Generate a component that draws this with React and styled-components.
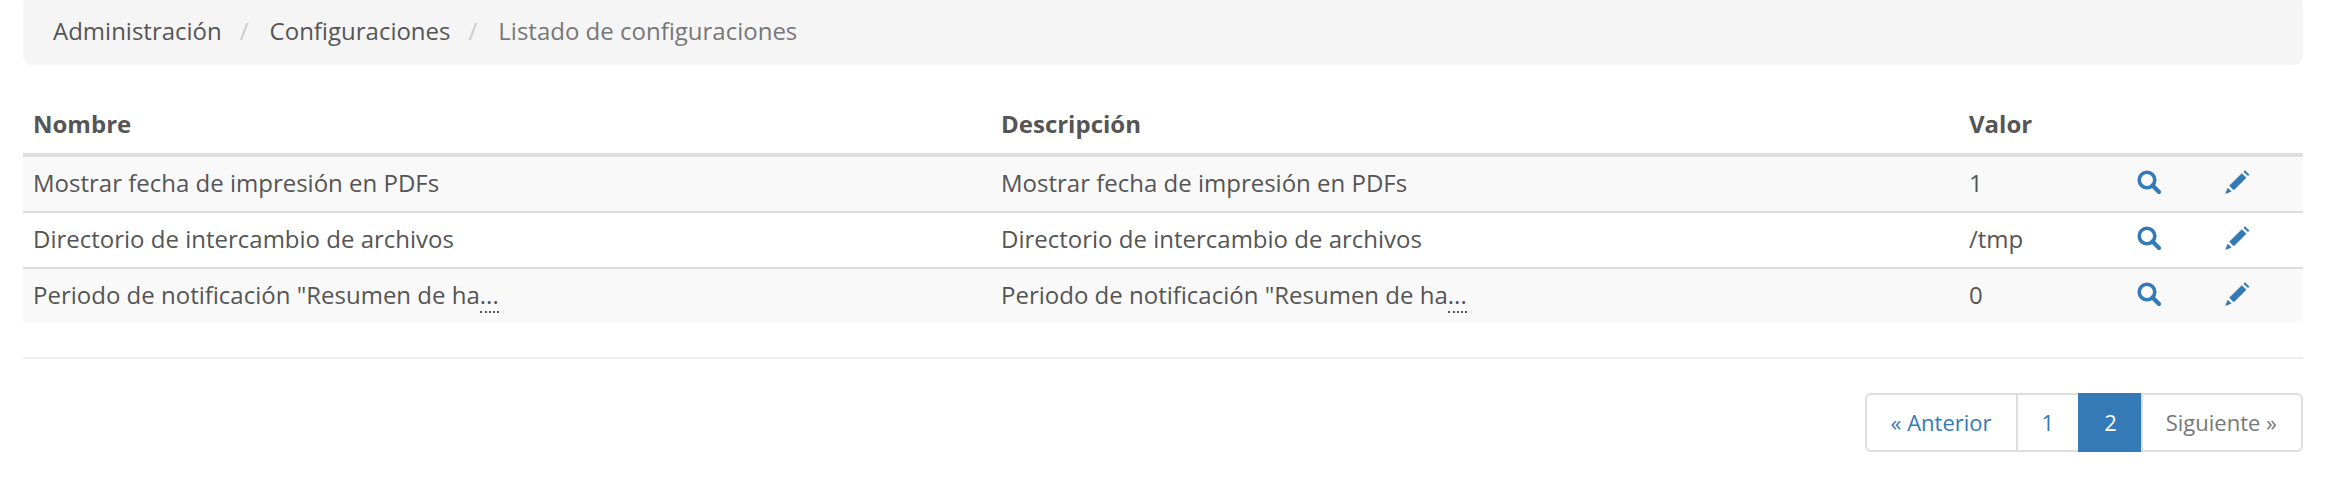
import styled, { createGlobalStyle } from 'styled-components';

const rows = [
  { name: 'Mostrar fecha de impresión en PDFs', value: '1' },
  { name: 'Directorio de intercambio de archivos', value: '/tmp' },
  { name: 'Periodo de notificación "Resumen de ha', value: '0', cut: true },
];

function SearchIcon() {
  return (
    <svg width="24" height="24" viewBox="0 0 24 24" aria-hidden="true">
      <circle cx="10" cy="10" r="7.8" fill="none" stroke="currentColor" strokeWidth="3.6" />
      <path d="M15.5 15.5 L22 22" stroke="currentColor" strokeWidth="4.2" strokeLinecap="round" />
    </svg>
  );
}

function PencilIcon() {
  return (
    <svg width="25" height="24" viewBox="0 0 25 24" aria-hidden="true">
      <path fill="currentColor" d="M19.8 0.3 L24.4 4.6 L23 6 L18.4 1.7 Z" />
      <path fill="currentColor" d="M16.8 3.2 L21.4 7.7 L8.8 20.2 L4.2 15.8 Z" />
      <path fill="currentColor" d="M2.6 17.8 L6.6 21.6 L0.3 24 Z" />
    </svg>
  );
}

function App() {
  return (
    <>
      <GlobalStyle />
      <Page>
        <Breadcrumb>
          <Crumb>Administración</Crumb>
          <Crumb>Configuraciones</Crumb>
          <Crumb $active>Listado de configuraciones</Crumb>
        </Breadcrumb>
        <Table>
          <colgroup>
            <TextCol />
            <TextCol />
            <ValueCol />
            <IconCol />
            <IconCol />
          </colgroup>
          <thead>
            <tr>
              <Th>Nombre</Th>
              <Th>Descripción</Th>
              <Th>Valor</Th>
              <Th />
              <Th />
            </tr>
          </thead>
          <tbody>
            {rows.map((row) => (
              <Row key={row.name}>
                <Td>
                  {row.name}
                  {row.cut && <Abbr title={row.name}>...</Abbr>}
                </Td>
                <Td>
                  {row.name}
                  {row.cut && <Abbr title={row.name}>...</Abbr>}
                </Td>
                <Td>{row.value}</Td>
                <Td>
                  <IconLink href="#"><SearchIcon /></IconLink>
                </Td>
                <Td>
                  <IconLink href="#"><PencilIcon /></IconLink>
                </Td>
              </Row>
            ))}
          </tbody>
        </Table>
        <Divider />
        <PagerWrap>
          <Pager>
            <PageLink href="#" $first>« Anterior</PageLink>
            <PageLink href="#">1</PageLink>
            <PageLink $active>2</PageLink>
            <PageLink $muted $last>Siguiente »</PageLink>
          </Pager>
        </PagerWrap>
      </Page>
    </>
  );
}

const GlobalStyle = createGlobalStyle`
  * {
    box-sizing: border-box;
  }
  body {
    margin: 0;
    background: #fff;
    color: #555;
    font-family: "Open Sans", sans-serif;
    font-size: 24px;
    line-height: 30px;
  }
`;

const Page = styled.div`
  padding: 0 47px 0 23px;
`;

const Breadcrumb = styled.ol`
  list-style: none;
  margin: 0 0 35px;
  height: 65px;
  padding: 16px 30px 0;
  display: flex;
  background: #f5f5f5;
  border-radius: 3px 3px 9px 9px;
`;

const Crumb = styled.li`
  color: ${(p) => (p.$active ? '#777' : '#555')};
  &:not(:first-child)::before {
    content: '/';
    color: #ccc;
    padding: 0 21px 0 18px;
  }
`;

const Table = styled.table`
  width: 100%;
  table-layout: fixed;
  border-collapse: separate;
  border-spacing: 0;
`;

const TextCol = styled.col`
  width: 968px;
`;

const ValueCol = styled.col`
  width: 168px;
`;

const IconCol = styled.col`
  width: 88px;
`;

const Th = styled.th`
  text-align: left;
  padding: 9px 10px 14px;
  height: 57px;
  border-bottom: 4px solid #ddd;
  font-weight: 700;
`;

const Row = styled.tr`
  &:nth-child(odd) {
    background: #f9f9f9;
  }
  & + & td {
    border-top: 2px solid #ddd;
  }
`;

const Td = styled.td`
  padding: 11px 10px 13px;
  white-space: nowrap;
  overflow: hidden;
`;

const Abbr = styled.abbr`
  text-decoration: none;
  border-bottom: 2px dotted #555;
  cursor: help;
`;

const IconLink = styled.a`
  display: flex;
  height: 30px;
  padding-top: 2px;
  color: #337ab7;
`;

const Divider = styled.hr`
  border: 0;
  border-top: 2px solid #eee;
  margin: 34px 0 0;
`;

const PagerWrap = styled.div`
  display: flex;
  justify-content: flex-end;
  margin-top: 34px;
`;

const Pager = styled.nav`
  display: flex;
`;

const PageLink = styled.a`
  height: 59px;
  padding: 12px 24px 12px ${(p) => (p.$last ? '23px' : '24px')};
  font-size: 22px;
  text-decoration: none;
  border: 2px solid #ddd;
  margin-left: -2px;
  background: ${(p) => (p.$active ? '#337ab7' : '#fff')};
  border-color: ${(p) => (p.$active ? '#337ab7' : '#ddd')};
  color: ${(p) => (p.$active ? '#fff' : p.$muted ? '#777' : '#337ab7')};
  border-radius: ${(p) => (p.$first ? '6px 0 0 6px' : p.$last ? '0 6px 6px 0' : '0')};
`;

export default App;
